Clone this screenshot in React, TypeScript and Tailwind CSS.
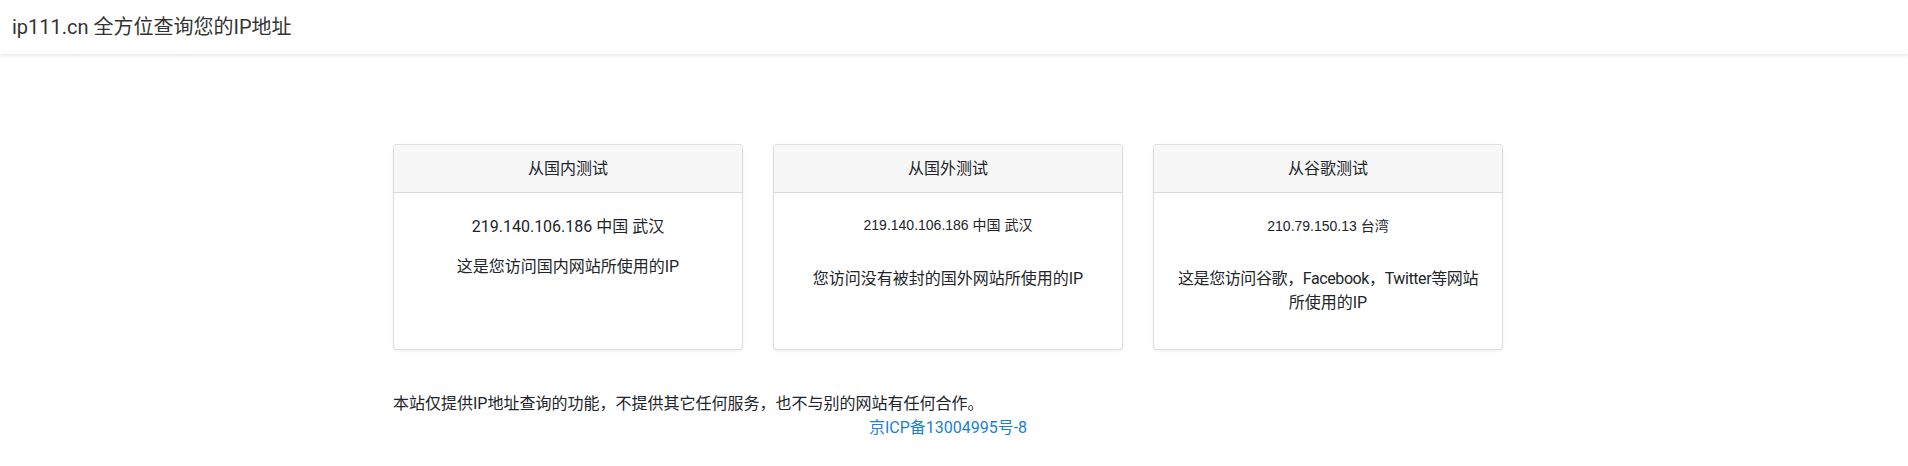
import type { ReactNode } from 'react'

interface TestCardProps {
  title: string
  children: ReactNode
}

function TestCard({ title, children }: TestCardProps) {
  return (
    <div className="h-[206px] rounded-[4px] border border-[rgba(0,0,0,0.125)] bg-white shadow-[0_1px_3px_rgba(0,0,0,0.08)] overflow-hidden">
      <div className="h-[48px] flex items-center justify-center bg-[#f7f7f7] border-b border-[rgba(0,0,0,0.125)] text-[16px] text-[#212529]">
        {title}
      </div>
      <div className="px-5 text-center text-[#212529]">{children}</div>
    </div>
  )
}

export default function App() {
  return (
    <div className="min-h-screen bg-white font-['Roboto','Noto_Sans_CJK_SC',sans-serif]">
      {/* Top bar */}
      <nav className="h-[54px] flex items-center pl-[12px] bg-white shadow-[0_1px_4px_rgba(0,0,0,0.12)]">
        <span className="text-[20px] text-[#333]">ip111.cn 全方位查询您的IP地址</span>
      </nav>

      <main className="w-[1896px]">
        <div className="mx-auto w-[1110px] pt-[90px]">
          <div className="grid grid-cols-3 gap-[30px]">
            <TestCard title="从国内测试">
              <p className="pt-[22px] text-[16px] leading-[24px]">219.140.106.186 中国 武汉</p>
              <p className="mt-4 text-[16px] leading-[24px]">这是您访问国内网站所使用的IP</p>
            </TestCard>

            <TestCard title="从国外测试">
              <p className="pt-[22px] font-['Liberation_Sans','Noto_Sans_CJK_SC',sans-serif] text-[14px] leading-[20px]">
                219.140.106.186 中国 武汉
              </p>
              <p className="mt-[32px] text-[16px] leading-[24px]">您访问没有被封的国外网站所使用的IP</p>
            </TestCard>

            <TestCard title="从谷歌测试">
              <p className="pt-[23px] font-['Liberation_Sans','Noto_Sans_CJK_SC',sans-serif] text-[14px] leading-[20px]">
                210.79.150.13 台湾
              </p>
              <p className="mt-[31px] text-[16px] leading-[24px]">
                <span className="whitespace-nowrap tracking-[-0.4px]">这是您访问谷歌，Facebook，Twitter等网站</span>
                <br />
                所使用的IP
              </p>
            </TestCard>
          </div>

          <p className="mt-[42px] text-[16px] leading-[24px] text-[#212529]">
            本站仅提供IP地址查询的功能，不提供其它任何服务，也不与别的网站有任何合作。
          </p>
          <div className="text-center text-[16px] leading-[24px]">
            <a href="#" className="text-[#1a7fd8]">京ICP备13004995号-8</a>
          </div>
        </div>
      </main>
    </div>
  )
}
